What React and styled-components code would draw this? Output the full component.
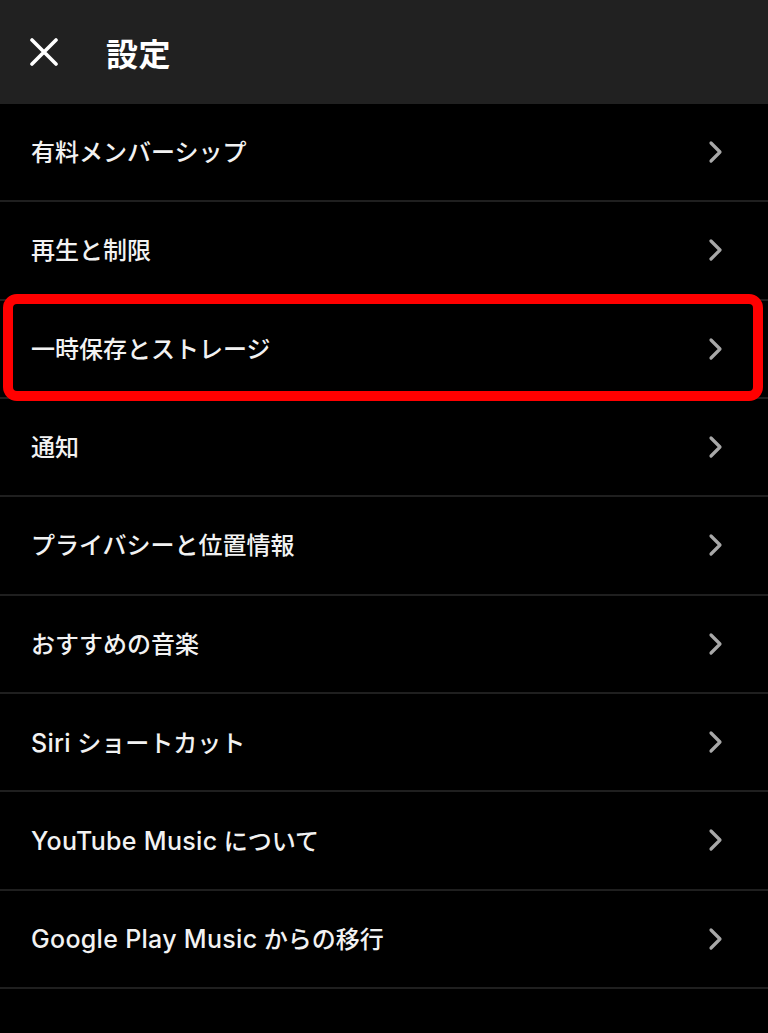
import React from "react";
import styled, { createGlobalStyle } from "styled-components";

const GlobalStyle = createGlobalStyle`
  html, body {
    margin: 0;
    padding: 0;
    background: #000;
  }
  body {
    font-family: Inter, "Noto Sans CJK JP", "Noto Sans", sans-serif;
    color: #f2f2f2;
    -webkit-font-smoothing: antialiased;
  }
`;

const Screen = styled.div`
  width: 768px;
  min-height: 1033px;
  background: #000;
  display: flex;
  flex-direction: column;
`;

const Header = styled.header`
  height: 104px;
  background: #212121;
  display: flex;
  align-items: center;
  padding-left: 30px;
  gap: 48px;
  box-sizing: border-box;
`;

const CloseButton = styled.button`
  width: 28px;
  height: 28px;
  padding: 0;
  border: none;
  background: none;
  display: flex;
  align-items: center;
  justify-content: center;
  color: #fff;
  cursor: pointer;
`;

const Title = styled.h1`
  margin: 0;
  font-family: "Noto Sans CJK JP", sans-serif;
  font-size: 32px;
  font-weight: 700;
  letter-spacing: 0.5px;
  color: #fff;
`;

const List = styled.ul`
  list-style: none;
  margin: 0;
  padding: 0;
`;

const Item = styled.li`
  position: relative;
  height: 98.33px;
  box-sizing: border-box;
  border-bottom: 2px solid #1f1f1f;
  display: flex;
  align-items: center;
  justify-content: space-between;
  padding: 0 44px 0 31px;
`;

const Label = styled.span`
  font-size: 24px;
  font-weight: 500;
  color: #f2f2f2;
  line-height: 1;
  padding-top: 2px;
`;

/* Latin words in a label run a touch wider than the kana around them */
const Latin = styled.span`
  font-size: 25px;
  letter-spacing: 0.3px;
`;

const Highlight = styled.div`
  position: absolute;
  left: 3px;
  right: 5px;
  top: -7px;
  bottom: -4px;
  border: 10px solid #ff0000;
  border-radius: 14px;
  pointer-events: none;
`;

const CloseIcon = () => (
  <svg width="28" height="28" viewBox="0 0 28 28" fill="none">
    <path
      d="M2 2 L26 26 M26 2 L2 26"
      stroke="currentColor"
      strokeWidth="3.6"
      strokeLinecap="round"
    />
  </svg>
);

const Chevron = () => (
  <svg width="16" height="24" viewBox="0 0 16 24" fill="none">
    <path
      d="M3 3 L12 12 L3 21"
      stroke="#a8a8a8"
      strokeWidth="3.2"
      strokeLinecap="round"
      strokeLinejoin="round"
    />
  </svg>
);

const items = [
  { text: "有料メンバーシップ" },
  { text: "再生と制限" },
  { text: "一時保存とストレージ", marked: true },
  { text: "通知" },
  { text: "プライバシーと位置情報" },
  { text: "おすすめの音楽" },
  { latin: "Siri", text: " ショートカット" },
  { latin: "YouTube Music", text: " について" },
  { latin: "Google Play Music", text: " からの移行" },
];

export default function App() {
  return (
    <>
      <GlobalStyle />
      <Screen>
        <Header>
          <CloseButton aria-label="閉じる">
            <CloseIcon />
          </CloseButton>
          <Title>設定</Title>
        </Header>
        <List>
          {items.map((item) => (
            <Item key={(item.latin || "") + item.text}>
              <Label>
                {item.latin && <Latin>{item.latin}</Latin>}
                {item.text}
              </Label>
              <Chevron />
              {item.marked && <Highlight />}
            </Item>
          ))}
        </List>
      </Screen>
    </>
  );
}
